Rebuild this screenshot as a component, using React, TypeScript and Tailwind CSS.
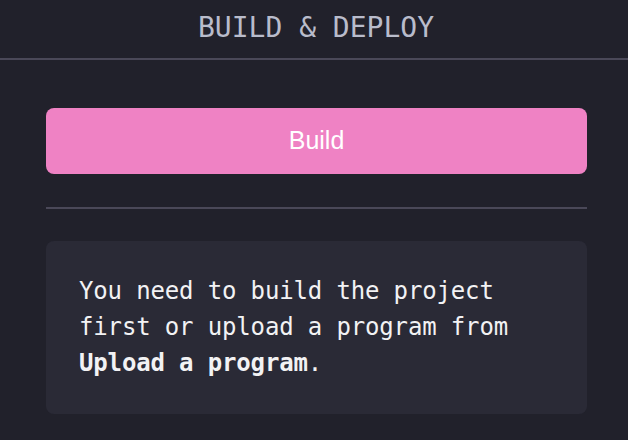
export default function App() {
  const mono = { fontFamily: '"DejaVu Sans Mono", "Liberation Mono", monospace' };
  return (
    <div className="w-[628px] h-[440px] bg-[#21212b] overflow-hidden" style={mono}>
      <div className="h-[60px] border-b-2 border-[#4a4858] flex items-center justify-center">
        <h1 className="text-[28px] leading-none text-[#b9bccb] tracking-[0px] mt-[-2px] ml-[4px]">BUILD &amp; DEPLOY</h1>
      </div>
      <div className="pl-[46px] pr-[41px] pt-[48px] flex flex-col">
        <button
          className="h-[66px] w-full rounded-[8px] bg-[#ef82c4] text-white text-[25px]"
          style={{ fontFamily: '"Liberation Sans", Arial, sans-serif' }}
        >
          Build
        </button>
        <div className="mt-[33px] h-[2px] bg-[#4a4858]" />
        <div className="mt-[32px] rounded-[8px] bg-[#2a2a36] pl-[33px] pr-[20px] pt-[32px] pb-[33px] text-[24px] leading-[36px] text-[#f2f2f4] tracking-[-0.15px]">
          You need to build the project
          <br />
          first or upload a program from
          <br />
          <span className="font-bold">Upload a program</span>.
        </div>
      </div>
    </div>
  );
}
